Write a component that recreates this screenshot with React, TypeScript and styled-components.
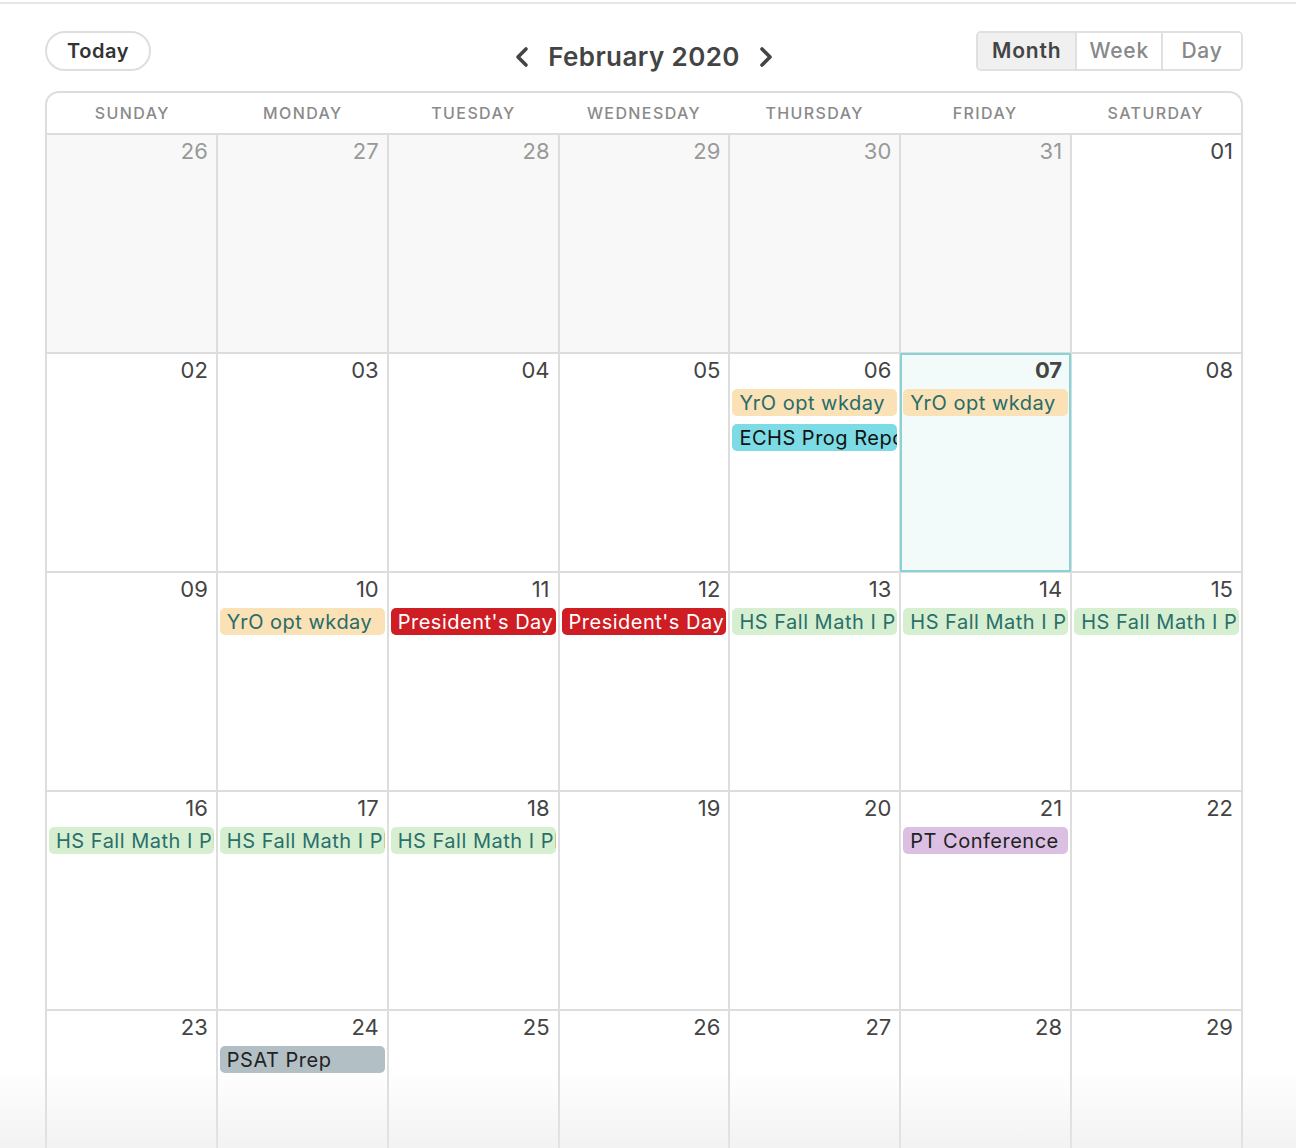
import React from "react";
import styled, { createGlobalStyle } from "styled-components";

const GlobalStyle = createGlobalStyle`
  html, body {
    margin: 0;
    padding: 0;
    background: #fff;
    font-family: Inter, "Open Sans", "Liberation Sans", sans-serif;
    color: #444;
  }
`;

type Tone = "peach" | "cyan" | "red" | "green" | "purple" | "slate";

const tones: Record<Tone, { bg: string; fg: string }> = {
  peach: { bg: "#fbe1b6", fg: "#276c69" },
  cyan: { bg: "#7cdbe4", fg: "#111" },
  red: { bg: "#cf1d24", fg: "#fff" },
  green: { bg: "#d6efd0", fg: "#2a6f6b" },
  purple: { bg: "#dcc0e3", fg: "#222" },
  slate: { bg: "#b2c0c5", fg: "#222" },
};

type Day = {
  label: string;
  muted?: boolean;
  today?: boolean;
  events?: { title: string; tone: Tone }[];
};

const yro = { title: "YrO opt wkday", tone: "peach" as Tone };
const pres = { title: "President's Day", tone: "red" as Tone };
const math = { title: "HS Fall Math I PLC", tone: "green" as Tone };

const weeks: Day[][] = [
  [
    { label: "26", muted: true },
    { label: "27", muted: true },
    { label: "28", muted: true },
    { label: "29", muted: true },
    { label: "30", muted: true },
    { label: "31", muted: true },
    { label: "01" },
  ],
  [
    { label: "02" },
    { label: "03" },
    { label: "04" },
    { label: "05" },
    { label: "06", events: [yro, { title: "ECHS Prog Report", tone: "cyan" }] },
    { label: "07", today: true, events: [yro] },
    { label: "08" },
  ],
  [
    { label: "09" },
    { label: "10", events: [yro] },
    { label: "11", events: [pres] },
    { label: "12", events: [pres] },
    { label: "13", events: [math] },
    { label: "14", events: [math] },
    { label: "15", events: [math] },
  ],
  [
    { label: "16", events: [math] },
    { label: "17", events: [math] },
    { label: "18", events: [math] },
    { label: "19" },
    { label: "20" },
    { label: "21", events: [{ title: "PT Conference", tone: "purple" }] },
    { label: "22" },
  ],
  [
    { label: "23" },
    { label: "24", events: [{ title: "PSAT Prep", tone: "slate" }] },
    { label: "25" },
    { label: "26" },
    { label: "27" },
    { label: "28" },
    { label: "29" },
  ],
];

const dayNames = ["Sunday", "Monday", "Tuesday", "Wednesday", "Thursday", "Friday", "Saturday"];

const Chevron = ({ dir }: { dir: "left" | "right" }) => (
  <svg width="16" height="22" viewBox="0 0 16 22">
    <polyline
      points={dir === "left" ? "12,3 4,11 12,19" : "4,3 12,11 4,19"}
      fill="none"
      stroke="#444"
      strokeWidth="3.6"
      strokeLinecap="round"
      strokeLinejoin="round"
    />
  </svg>
);

const App: React.FC = () => {
  return (
    <>
      <GlobalStyle />
      <Page>
        <Toolbar>
          <TodayButton>Today</TodayButton>
          <Title>
            <NavButton>
              <Chevron dir="left" />
            </NavButton>
            <h2>February 2020</h2>
            <NavButton>
              <Chevron dir="right" />
            </NavButton>
          </Title>
          <Views>
            <ViewButton active>Month</ViewButton>
            <ViewButton>Week</ViewButton>
            <ViewButton>Day</ViewButton>
          </Views>
        </Toolbar>

        <Calendar>
          <HeaderRow>
            {dayNames.map((d) => (
              <HeaderCell key={d}>{d}</HeaderCell>
            ))}
          </HeaderRow>
          <Grid>
            {weeks.flat().map((day, i) => (
              <Cell key={i} muted={day.muted} today={day.today}>
                <DateNum muted={day.muted} today={day.today}>
                  {day.label}
                </DateNum>
                {day.events?.map((ev, j) => (
                  <Chip key={j} tone={ev.tone}>
                    {ev.title}
                  </Chip>
                ))}
              </Cell>
            ))}
          </Grid>
        </Calendar>
      </Page>
      <Fade />
    </>
  );
};

export default App;

const Page = styled.div`
  margin-top: 2px;
  border-top: 2px solid #e6e6e6;
  padding: 25px 53px 0 45px;
`;

const Toolbar = styled.div`
  display: grid;
  grid-template-columns: 1fr auto 1fr;
  align-items: center;
  height: 40px;
  margin-bottom: 22px;
`;

const TodayButton = styled.button`
  justify-self: start;
  width: 106px;
  height: 40px;
  border: 2px solid #dedede;
  border-radius: 20px;
  background: #fff;
  font-family: inherit;
  font-size: 20px;
  font-weight: 600;
  letter-spacing: 0.6px;
  color: #333;
  padding: 0;
`;

const Title = styled.div`
  display: flex;
  align-items: center;
  gap: 18px;
  margin-top: 12px;

  h2 {
    margin: 0;
    font-size: 26px;
    font-weight: 600;
    color: #444;
    letter-spacing: 0.4px;
  }
`;

const NavButton = styled.button`
  display: flex;
  align-items: center;
  border: 0;
  background: none;
  padding: 0;
`;

const Views = styled.div`
  justify-self: end;
  display: flex;
  height: 40px;
  border: 2px solid #e0e0e0;
  border-radius: 5px;
  overflow: hidden;
  box-sizing: border-box;
`;

const ViewButton = styled.button<{ active?: boolean }>`
  min-width: 80px;
  border: 0;
  border-left: 2px solid #e0e0e0;
  background: ${({ active }) => (active ? "#f0f0f0" : "#fff")};
  color: ${({ active }) => (active ? "#444" : "#888")};
  font-family: inherit;
  font-size: 21px;
  letter-spacing: 0.8px;
  font-weight: ${({ active }) => (active ? 600 : 500)};
  padding: 0 12px;

  &:first-child {
    border-left: 0;
    padding: 0 14px;
  }
`;

const Calendar = styled.div`
  border: 2px solid #dddddd;
  border-bottom: 0;
  border-radius: 14px 14px 0 0;
  overflow: hidden;
`;

const HeaderRow = styled.div`
  display: grid;
  grid-template-columns: repeat(7, 1fr);
  height: 40px;
  border-bottom: 2px solid #dddddd;
`;

const HeaderCell = styled.div`
  display: flex;
  align-items: center;
  justify-content: center;
  text-transform: uppercase;
  font-size: 16px;
  font-weight: 500;
  letter-spacing: 1.4px;
  color: #8a8a8a;
`;

const Grid = styled.div`
  display: grid;
  grid-template-columns: repeat(7, 1fr);
  grid-auto-rows: 217px;
  gap: 2px;
  background: #dddddd;
`;

const Cell = styled.div<{ muted?: boolean; today?: boolean }>`
  display: flex;
  flex-direction: column;
  gap: 8px;
  min-width: 0;
  padding: 2px 2px;
  background: ${({ muted, today }) => (today ? "#f2fbfa" : muted ? "#f8f8f8" : "#fff")};
  outline: ${({ today }) => (today ? "2px solid #88d3d3" : "none")};
  outline-offset: ${({ today }) => (today ? "-1px" : "0")};
  position: relative;
  z-index: ${({ today }) => (today ? 1 : 0)};
`;

const DateNum = styled.div<{ muted?: boolean; today?: boolean }>`
  text-align: right;
  padding-right: 6px;
  font-size: 22px;
  line-height: 28px;
  margin-bottom: -3px;
  font-weight: ${({ today }) => (today ? 700 : 400)};
  color: ${({ muted }) => (muted ? "#999" : "#444")};
`;

const Chip = styled.div<{ tone: Tone }>`
  height: 27px;
  line-height: 28px;
  padding: 0 7px;
  border-radius: 5px;
  background: ${({ tone }) => tones[tone].bg};
  color: ${({ tone }) => tones[tone].fg};
  font-size: 20px;
  letter-spacing: 0.5px;
  white-space: nowrap;
  overflow: hidden;
`;

const Fade = styled.div`
  position: fixed;
  left: 0;
  right: 0;
  bottom: 0;
  height: 80px;
  pointer-events: none;
  z-index: 5;
  background: linear-gradient(rgba(232, 232, 232, 0), rgba(232, 232, 232, 0.55));
`;
